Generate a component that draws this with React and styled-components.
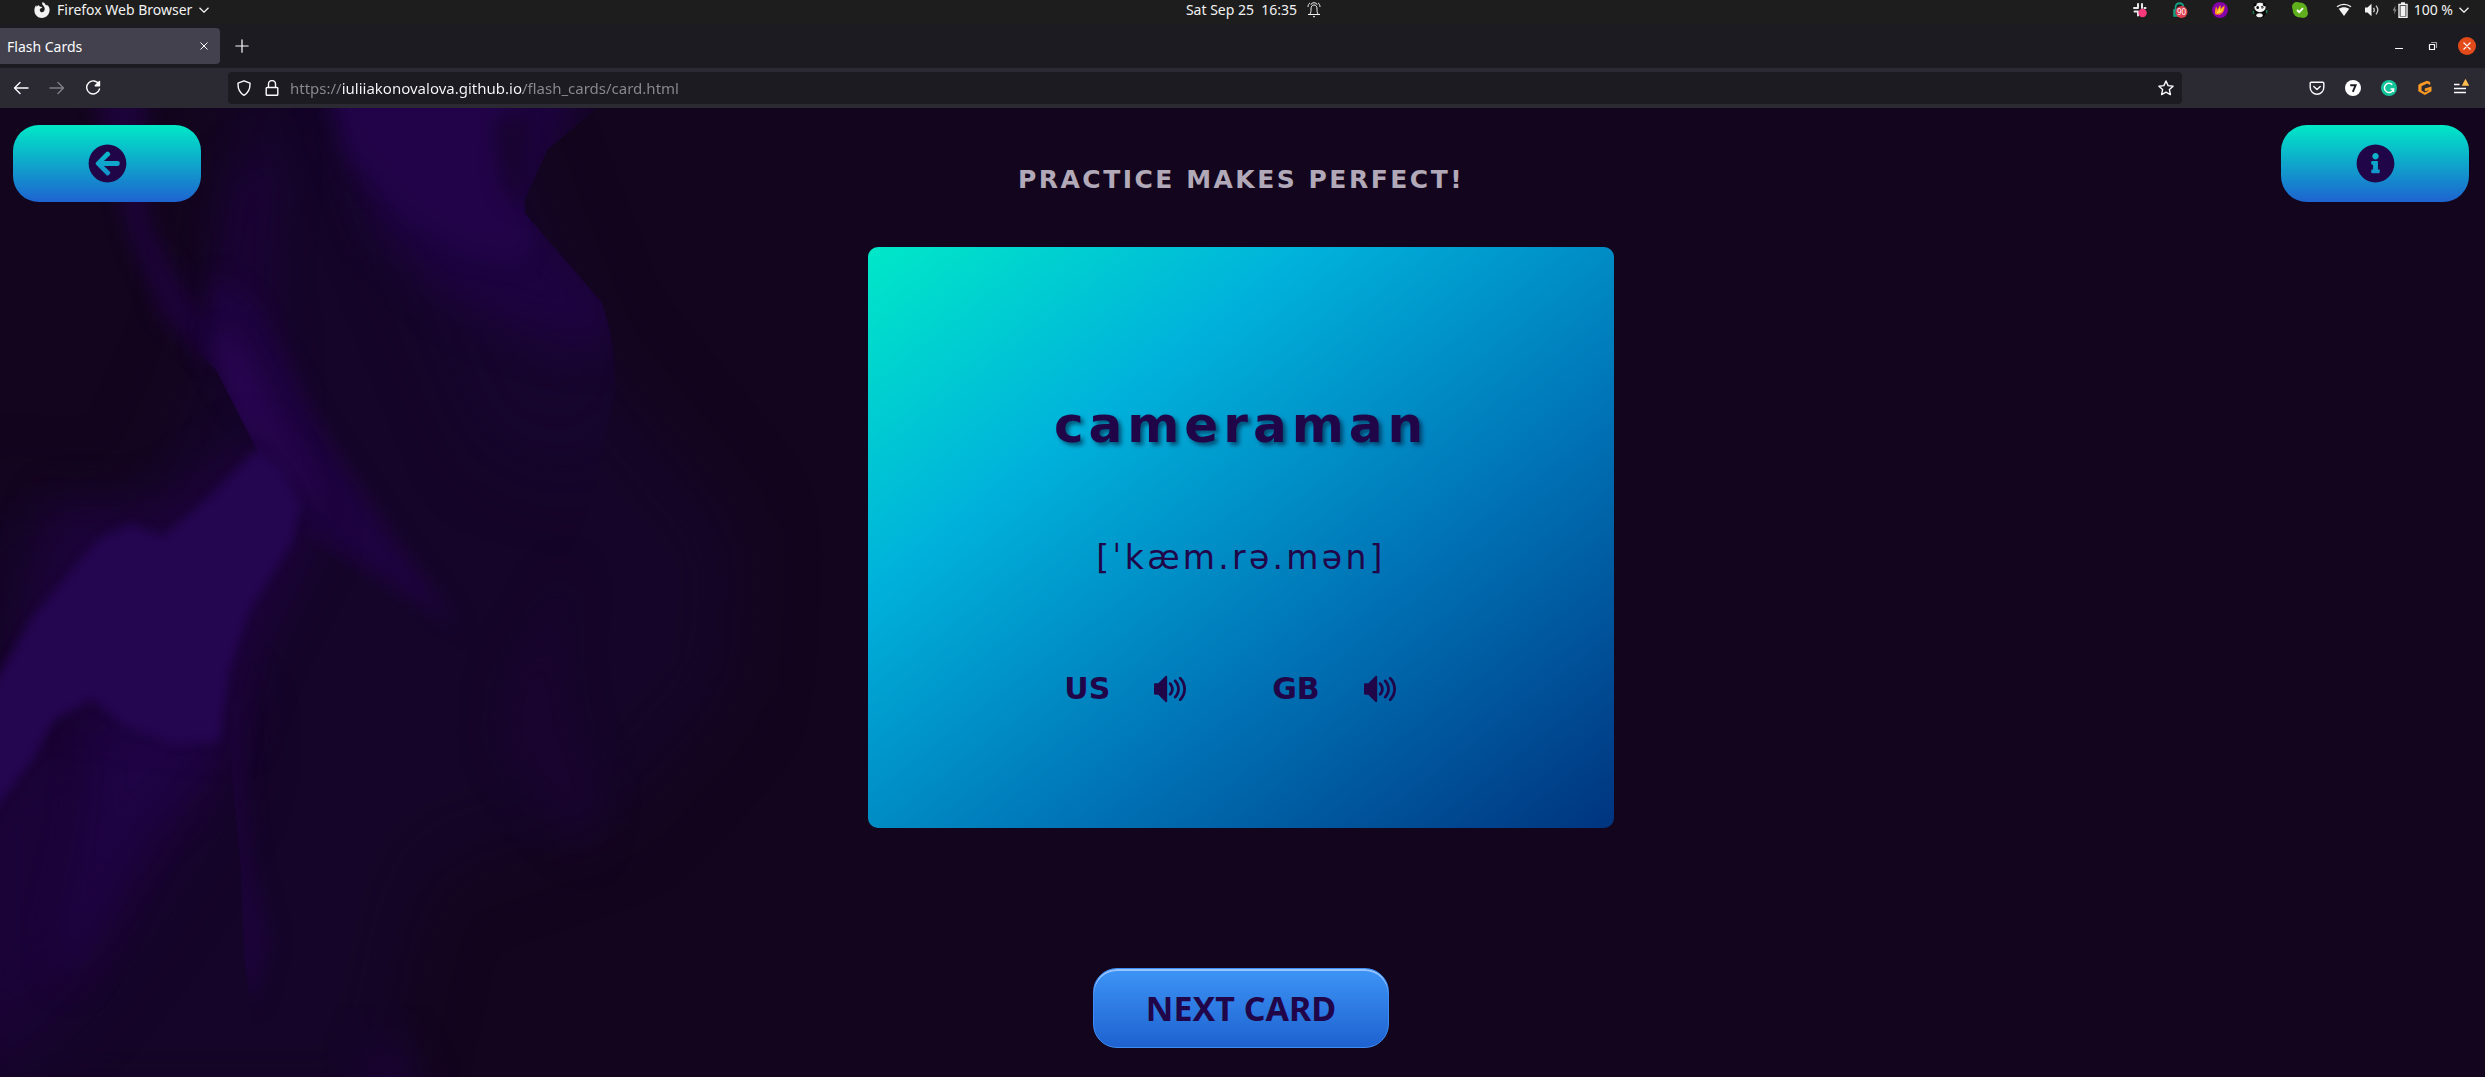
import React from "react";
import styled, { createGlobalStyle } from "styled-components";
import { FaArrowCircleLeft, FaInfoCircle } from "react-icons/fa";
import { ImVolumeHigh } from "react-icons/im";

const GlobalStyle = createGlobalStyle`
  * { box-sizing: border-box; }
  body {
    margin: 0;
    background: #13051d;
    font-family: "Noto Sans", "Open Sans", sans-serif;
    font-size: 14px;
    color: #fbfbfe;
  }
  button { border: 0; padding: 0; background: none; color: inherit; font: inherit; cursor: pointer; }
  svg { display: block; flex: none; }
`;

const Screen = styled.div`
  display: flex;
  flex-direction: column;
  min-height: 100vh;
`;

/* ---------- desktop bar ---------- */

const DesktopBar = styled.div`
  display: grid;
  grid-template-columns: 1fr auto 1fr;
  align-items: center;
  height: 24px;
  padding: 0 16px 4px;
  background: #1d1d1d;
  color: #f2f2f2;
  line-height: 20px;
`;

const AppMenu = styled.button`
  display: flex;
  align-items: center;
  justify-self: start;
  gap: 7px;
  margin-left: 18px;
`;

const Clock = styled.button`
  display: flex;
  align-items: center;
  gap: 10px;
  padding-left: 22px;
  white-space: pre;
`;

const Tray = styled.div`
  display: flex;
  align-items: center;
  justify-self: end;
  gap: 24px;
`;

const SystemMenu = styled.button`
  display: flex;
  align-items: center;
  gap: 6px;
  margin-left: 4px;
`;

const SystemIcons = styled.span`
  display: flex;
  align-items: center;
  gap: 12px;
`;

/* ---------- browser ---------- */

const TabStrip = styled.div`
  display: flex;
  align-items: center;
  height: 44px;
  padding-right: 9px;
  background: #1c1b22;
`;

const Tab = styled.div`
  display: flex;
  align-items: center;
  justify-content: space-between;
  width: 220px;
  height: 36px;
  padding: 0 11px 0 7px;
  border-radius: 0 4px 4px 0;
  background: #42414d;
`;

const IconButton = styled.button`
  display: grid;
  place-items: center;
  width: ${(p) => p.$size || 36}px;
  height: ${(p) => p.$size || 36}px;
  opacity: ${(p) => (p.$dim ? 0.4 : 1)};
`;

const NewTab = styled(IconButton)`
  margin-left: 4px;
`;

const WindowControls = styled.div`
  display: flex;
  align-items: center;
  gap: 16px;
  margin-left: auto;
`;

const CloseWindow = styled(IconButton)`
  border-radius: 50%;
  background: #e24a19;
`;

const Toolbar = styled.div`
  display: flex;
  align-items: center;
  height: 40px;
  padding: 0 6px 0 3px;
  background: #2b2a33;
`;

const AddressBar = styled.div`
  display: flex;
  flex: 1;
  align-items: center;
  height: 32px;
  margin: 0 117px;
  padding: 0 2px;
  border-radius: 4px;
  background: #1c1b22;
`;

/* the host is brighter than the scheme and the path */
const Address = styled.input`
  flex: 1;
  min-width: 0;
  height: 24px;
  margin-left: 4px;
  padding: 0;
  border: 0;
  outline: 0;
  color: transparent;
  font: inherit;
  font-size: 15px;
  background: linear-gradient(90deg, #8b8a92 52px, #fbfbfe 52px, #fbfbfe 233px, #8b8a92 233px);
  background-clip: text;
  -webkit-background-clip: text;
`;

/* ---------- page ---------- */

const Page = styled.main`
  position: relative;
  display: flex;
  flex: 1;
  flex-direction: column;
  align-items: center;
  padding: 17px 16px 28px 13px;
  background: #13051d;
  font-family: "DejaVu Sans", sans-serif;
`;

const Silk = styled.svg`
  position: absolute;
  top: 0;
  left: 0;
  width: 850px;
  height: 100%;
`;

const Header = styled.header`
  position: relative;
  display: grid;
  grid-template-columns: 1fr auto 1fr;
  align-self: stretch;
  align-items: start;
  min-height: 122px;
`;

const PillButton = styled.button`
  display: grid;
  place-items: center;
  justify-self: ${(p) => p.$side};
  width: 188px;
  height: 77px;
  border-radius: 26px;
  background: linear-gradient(#00e9c7, #1e63d0);
  color: #210549;
`;

const Motto = styled.h1`
  margin: 40px 0 0;
  color: #b1a9b8;
  font-size: 25px;
  line-height: 30px;
  letter-spacing: 0.1em;
  text-transform: uppercase;
`;

const Card = styled.section`
  position: relative;
  display: flex;
  flex-direction: column;
  align-items: center;
  width: 30vw;
  min-height: calc((100vh - 108px) * 0.6);
  padding-top: 149px;
  border-radius: 10px;
  background: linear-gradient(to bottom right, #00e8c8 0%, #00b1db 30%, #0072b5 64%, #00347f 100%);
  color: #210549;
`;

const Word = styled.h2`
  margin: 0;
  font-size: 50px;
  line-height: 58px;
  letter-spacing: 0.1em;
  text-shadow: 3px 3px 4px rgba(0, 20, 50, 0.6);
`;

const Phonetic = styled.p`
  margin: 85px 0 94px;
  font-size: 33px;
  line-height: 38px;
  letter-spacing: 0.1em;
`;

const Voices = styled.div`
  display: flex;
  gap: 84px;
  padding-right: 20px;
`;

const Voice = styled.div`
  display: flex;
  align-items: center;
  gap: 42px;
  font-size: 30px;
  font-weight: 700;
  line-height: 36px;
`;

const NextButton = styled.button`
  position: relative;
  width: 296px;
  height: 80px;
  margin-top: 140px;
  border: 1px solid #3d8df3;
  border-radius: 24px;
  background: linear-gradient(#3d94f6, #1e62d0);
  box-shadow: inset 0 2px 0 #97c4fe;
  color: #210549;
  font-family: "Noto Sans", "Open Sans", sans-serif;
  font-size: 34px;
  font-weight: 700;
  line-height: 40px;
`;

/* ---------- icons ---------- */

const Line = ({ size = 16, width = 1.4, children }) => (
  <svg width={size} height={size} viewBox="0 0 16 16" fill="none" stroke="currentColor"
    strokeWidth={width} strokeLinecap="round" strokeLinejoin="round" aria-hidden="true">
    {children}
  </svg>
);

const Chevron = () => (
  <svg width="10" height="6" viewBox="0 0 10 6" fill="none" stroke="currentColor" strokeWidth="1.3" aria-hidden="true">
    <path d="M.5.7 5 5.2 9.500.7" />
  </svg>
);

const FirefoxMark = () => (
  <svg width="16" height="16" viewBox="0 0 16 16" aria-hidden="true">
    <path fill="#f2f2f2" d="M8.600 0c2 .8 2.500 1.800 2.700 2.800 1-.1 1.400.4 1.700 1.100.3-.2.300-.7.200-1.200C15 4.300 15.800 6.200 15.600 8.600 15.200 12.900 12 16 8 16 3.700 16 .4 12.800.4 8.500c0-2.300.7-4.100 1.800-5.500 0 .8.200 1.300.5 1.700.5-.9 1.200-1.300 2.100-1.500.5.900.9 1.300 1.700 1.500l1.700.2c-.2 1-1 1.400-1.900 1.700-.7.700-.6 1.500-.3 2.300.6 1.500 2.800 1.700 3.900.4 1.500-1.800.8-4.400-.5-5.600C8 2.600 7.900 1.300 8.600 0z" />
  </svg>
);

const Bell = () => (
  <svg width="14" height="16" viewBox="0 0 14 16" fill="none" stroke="currentColor" strokeWidth="1" aria-hidden="true">
    <path d="M1 12.500h12M3 12c1-1.500 1-3 1-5 0-2.500 1-4 3-4s3 1.500 3 4c0 2 0 3.500 1 5M6 14.700h2M3 .8C1.700 1.800 1 3.200 1 5M11 .8c1.300 1 2 2.400 2 4.200M4.500 3C3.300 2 5 .8 7 .8S10.700 2 9.500 3" />
  </svg>
);

const SlackTray = () => (
  <svg width="16" height="16" viewBox="0 0 16 16" aria-hidden="true">
    <g stroke="#e9e9e9" strokeWidth="2" strokeLinecap="round">
      <path d="M6 2v3M2 6h4M10 2v4M12.500 6h1M2.500 9.500h3.500M6 10v3.600" />
    </g>
    <circle cx="10.600" cy="11" r="4.200" fill="#f7397c" />
  </svg>
);

const BadgeTray = () => (
  <svg width="16" height="16" viewBox="0 0 16 16" aria-hidden="true">
    <path d="M2 14V8h6v6zM3.500 8V5a4 4 0 0 1 8 0v2" fill="#17806b" stroke="#17a085" strokeWidth="1.600" />
    <path d="M4.500 8V5.500a3 3 0 0 1 6 0V8z" fill="#1d1d1d" />
    <circle cx="9.500" cy="10" r="6" fill="#e03f52" />
    <text x="9.500" y="13" textAnchor="middle" fontSize="8" fontFamily="Noto Sans, sans-serif" fill="#fff">90</text>
  </svg>
);

const FlameTray = () => (
  <svg width="16" height="16" viewBox="0 0 16 16" aria-hidden="true">
    <circle cx="8" cy="8" r="8" fill="#8501a8" />
    <path d="M3 11.500c0-3 .3-5 1-7 .8.800 1.200 2 1.200 3.500C6 6.500 7 5 8 3c.8 1.200.9 2.500.8 4 1-1.400 2.200-2.500 3.700-3.500.3 4-1.500 8.600-5.300 9.400-1.700.3-3.200-.2-4.200-1.400z" fill="#ff9d16" />
    <path d="M5 11.500c0-2 2-3.500 2.500-6 .8 1 .8 2.500.5 3.500 1.300-.7 2-2 3-3-.3 3.500-1.800 5.500-6 5.500z" fill="#ffd43c" />
    <path d="M3 11.500c1 .8 2.500.8 4 .3 1.500-.5 2.500-1.500 3.500-2.500-.8 2.200-2 3.400-3.500 3.700-1.500.3-3-.2-4-1.500z" fill="#f23c5b" />
  </svg>
);

const PandaTray = () => (
  <svg width="16" height="16" viewBox="0 0 16 16" aria-hidden="true">
    <circle cx="8" cy="10" r="6" fill="#070707" />
    <path d="M1.500 9v3M14.600 8v3" stroke="#1f7a4d" strokeWidth="1.500" />
    <ellipse cx="8" cy="5.500" rx="5.600" ry="4.700" fill="#f4f4f4" />
    <circle cx="3" cy="2.600" r="1.600" fill="#0a0a0a" />
    <circle cx="12.500" cy="2.600" r="1.600" fill="#0a0a0a" />
    <ellipse cx="5.700" cy="5.500" rx="1.300" ry="1.500" fill="#0a0a0a" />
    <ellipse cx="10.200" cy="5.200" rx="1.200" ry="1.300" fill="#0a0a0a" />
    <circle cx="10" cy="5.300" r=".6" fill="#fff" />
    <ellipse cx="7.500" cy="13.200" rx="3.200" ry="2" fill="#f0f0f0" />
  </svg>
);

const CheckTray = () => (
  <svg width="16" height="16" viewBox="0 0 16 16" aria-hidden="true">
    <circle cx="8" cy="8" r="7.400" fill="#5fb01c" />
    <circle cx="4.700" cy="4.700" r="4.700" fill="#5fb01c" />
    <circle cx="11.300" cy="11.300" r="4.700" fill="#5fb01c" />
    <path d="m5 8 2.200 2.200L11 6.200" fill="none" stroke="#fff" strokeWidth="1.800" />
  </svg>
);

const Wifi = () => (
  <svg width="16" height="14" viewBox="0 0 16 14" aria-hidden="true">
    <path d="M1 3.800C5 .6 11 .6 15 3.800" fill="none" stroke="#f2f2f2" strokeWidth="1.400" />
    <path d="M2.700 5.700C6 3.600 10 3.600 13.300 5.700L8 13z" fill="#f2f2f2" />
  </svg>
);

const Volume = () => (
  <svg width="16" height="14" viewBox="0 0 16 14" aria-hidden="true">
    <path d="M1 4.500h2.500L7.500.8v12.400L3.500 9.500H1z" fill="#f2f2f2" />
    <path d="M9.500 4.800c1 1.400 1 3 0 4.400M12 2.600c2.200 2.700 2.200 6.100 0 8.800" fill="none" stroke="#d0d0d0" strokeWidth="1.300" />
  </svg>
);

const Battery = () => (
  <svg width="16" height="16" viewBox="0 0 16 16" aria-hidden="true">
    <path d="M3.500 3.500.7 8.500h1.800L2 12.500l2.500-5H3z" fill="#8c8c8c" />
    <path d="M9 1h4M7 2.500h8v12.800H7z" fill="none" stroke="#f2f2f2" strokeWidth="1.400" />
    <path d="M8.500 4h5v10h-5z" fill="#f2f2f2" />
  </svg>
);

const SevenMark = () => (
  <svg width="16" height="16" viewBox="0 0 16 16" aria-hidden="true">
    <circle cx="8" cy="8" r="8" fill="#fff" />
    <path d="M5.200 5.300h5.400L7.800 11.800" fill="none" stroke="#1c1b22" strokeWidth="1.900" />
  </svg>
);

const GreenMark = () => (
  <svg width="16" height="16" viewBox="0 0 16 16" aria-hidden="true">
    <circle cx="8" cy="8" r="8" fill="#15c39a" />
    <path d="M11.300 4.700A4.600 4.600 0 1 0 12.500 9H9.500M12.500 9v3" fill="none" stroke="#fff" strokeWidth="1.500" />
  </svg>
);

const HexMark = () => (
  <svg width="16" height="16" viewBox="0 0 16 16" aria-hidden="true">
    <path d="M10 .8 3.200 3.600 1.300 5v6.200L7.800 15l6.700-3.800V6.500L7.800 8.600v2.600l3.700-1v.6l-3.700 1.600-3.300-2V6.200L10.200 3.600l3 1.400V2z" fill="#f99a24" />
  </svg>
);

const MenuMark = () => (
  <svg width="18" height="20" viewBox="0 0 18 20" aria-hidden="true">
    <path d="M2 6.500h5.500M2 10.500h12M2 14.500h12" stroke="#fbfbfe" strokeWidth="1.300" />
    <path d="m13.500.8 3.700 6.900H9.800z" fill="#ffbd4f" />
  </svg>
);

const SilkBackdrop = () => (
  <Silk viewBox="0 13 1568 1555" preserveAspectRatio="none" aria-hidden="true" colorInterpolationFilters="sRGB">
    <defs>
      <filter id="wide" x="-40%" y="-40%" width="180%" height="180%"><feGaussianBlur stdDeviation="60" /></filter>
      <filter id="soft" x="-40%" y="-40%" width="180%" height="180%"><feGaussianBlur stdDeviation="34" /></filter>
      <filter id="mid" x="-40%" y="-40%" width="180%" height="180%"><feGaussianBlur stdDeviation="18" /></filter>
      <filter id="fine" x="-40%" y="-40%" width="180%" height="180%"><feGaussianBlur stdDeviation="8" /></filter>
      <clipPath id="fold"><path d="M300 0H1120L1010 80 968 160V182L1110 325Q1136 390 1135 465L1092 640 1040 760 900 1000H300z" /></clipPath>
      <clipPath id="streak"><path d="M420 960 428 1080 444 1230 450 1380 470 1500H760V960z" /></clipPath>
      <clipPath id="ridge"><path d="M150 0 200 160 300 350 400 435 470 555 560 700 900 920V0z" /></clipPath>
    </defs>
    <path filter="url(#wide)" fill="#150528" d="M-60 640 250 660 380 400 420 -60H900L1100 400 1380 700 1360 950 1150 1150 800 1250 700 1640H-60z" />
    <g clipPath="url(#fold)">
      <path filter="url(#wide)" fill="#17052e" d="M640 0H1080L1200 300 1180 480 1100 600 900 560z" />
      <path filter="url(#soft)" fill="#1d0340" d="M600 -60H1090L970 170 1150 340 1100 400 960 370 820 310 690 200z" />
      <path filter="url(#mid)" fill="#220349" d="M605 -40H960L925 110 985 210 960 260 860 245 740 180 645 90z" />
      <path filter="url(#mid)" fill="#180430" d="M910 30 980 20 960 170 930 140z" />
    </g>
    <path filter="url(#mid)" fill="#1d033c" d="M170 -20H270L275 200 350 320 390 350 400 430 300 350 240 220z" opacity=".9" />
    <path filter="url(#soft)" fill="#1a0336" d="M430 120 520 60 500 300 540 500 460 460 390 350z" />
    <g clipPath="url(#ridge)">
      <path filter="url(#mid)" fill="#1e0340" d="M395 280 470 330 600 540 740 720 850 850 780 810 560 690 440 520 380 420z" />
      <path filter="url(#mid)" fill="#27054f" d="M395 370 440 390 560 580 600 660 520 620 430 520z" />
    </g>
    <path filter="url(#wide)" fill="#1b0338" d="M-80 1080 200 950 430 1000 400 1100 250 1300 120 1450 -80 1600z" />
    <path filter="url(#soft)" fill="#1f0344" d="M180 960 420 960 390 1070 270 1170 190 1300 130 1410 110 1350 160 1180z" />
    <path filter="url(#soft)" fill="#1b0338" d="M90 650 280 650 470 540 600 690 490 880 440 1020 0 960z" />
    <path filter="url(#fine)" fill="#240550" d="M-20 950 60 830 180 705 240 680 300 700 370 650 475 560 520 590 555 650 540 710 460 820 422 920 405 1030 320 1035 230 1005 170 962 100 995 60 1060 -20 1150z" />
    <g clipPath="url(#streak)">
      <path filter="url(#mid)" fill="#1b0338" d="M400 900 440 960 460 1200 500 1350 470 1450 430 1400z" />
    </g>
    <path filter="url(#soft)" fill="#19042f" d="M1050 760 1038 900 1060 1020 1110 1110 1080 1200 990 1120 920 1030 935 930z" />
    <path filter="url(#soft)" fill="#1a0335" d="M690 1500 740 1520 790 1620H650z" />
  </Silk>
);

export default function App() {
  return (
    <Screen>
      <GlobalStyle />
      <DesktopBar>
        <AppMenu><FirefoxMark />Firefox Web Browser<Chevron /></AppMenu>
        <Clock>{"Sat Sep 25  16:35"}<Bell /></Clock>
        <Tray>
          <SlackTray /><BadgeTray /><FlameTray /><PandaTray /><CheckTray />
          <SystemMenu>
            <SystemIcons><Wifi /><Volume /><Battery /></SystemIcons>
            100 %
            <Chevron />
          </SystemMenu>
        </Tray>
      </DesktopBar>

      <TabStrip>
        <Tab>
          Flash Cards
          <IconButton $size={10} aria-label="Close tab"><Line size={8} width={2}><path d="m1.500 1.500 13 13M14.500 1.500l-13 13" /></Line></IconButton>
        </Tab>
        <NewTab aria-label="New tab"><Line size={14}><path d="M8 1v14M1 8h14" /></Line></NewTab>
        <WindowControls>
          <IconButton $size={18} aria-label="Minimise"><Line size={16} width={1.200}><path d="M4.500 10.500h7" /></Line></IconButton>
          <IconButton $size={18} aria-label="Restore">
            <Line size={16} width={1.200}><path d="M4.500 6.500h5v5h-5z" /><path opacity=".6" d="M6.500 4.500h5v5" /></Line>
          </IconButton>
          <CloseWindow $size={18} aria-label="Close"><Line size={10} width={2.200}><path d="m3 3 10 10M13 3 3 13" /></Line></CloseWindow>
        </WindowControls>
      </TabStrip>

      <Toolbar>
        <IconButton aria-label="Back"><Line><path d="M15 8H1.500M7 2.500 1.500 8 7 13.500" /></Line></IconButton>
        <IconButton $dim aria-label="Forward"><Line><path d="M1 8h13.500M9 2.500 14.500 8 9 13.500" /></Line></IconButton>
        <IconButton aria-label="Reload"><Line><path d="M14 4.500A6.500 6.500 0 1 0 14.500 9" /><path fill="currentColor" d="M14.500 1.500v4.300h-4.300z" /></Line></IconButton>
        <AddressBar>
          <IconButton $size={28} aria-label="Protections"><Line><path d="M8 .8 14 3.200C14.200 8.500 12.300 13 8 15.300 3.700 13 1.800 8.500 2 3.200z" /></Line></IconButton>
          <IconButton $size={28} aria-label="Site information"><Line><path d="M3 7.500h10a.8.8 0 0 1 .8.800v6.100a.8.8 0 0 1-.8.800H3a.8.8 0 0 1-.8-.8V8.300A.8.8 0 0 1 3 7.500zM4.500 7.500V4a3.500 3.500 0 0 1 7 0v3.500" /></Line></IconButton>
          <Address type="text" aria-label="Address" spellCheck={false} defaultValue="https://iuliiakonovalova.github.io/flash_cards/card.html" />
          <IconButton $size={28} aria-label="Bookmark this page"><Line><path d="m8 1 2.100 4.600 5 .6-3.700 3.400 1 5L8 12.200l-4.400 2.400 1-5L.9 6.200l5-.6z" /></Line></IconButton>
        </AddressBar>
        <IconButton aria-label="Save to Pocket"><Line><path d="M2.200 2.200h11.600a1 1 0 0 1 1 1V7.500a6.800 6.800 0 0 1-13.600 0V3.200a1 1 0 0 1 1-1zM4.800 6.500 8 9.500l3.200-3" /></Line></IconButton>
        <IconButton aria-label="Seven extension"><SevenMark /></IconButton>
        <IconButton aria-label="Writing assistant"><GreenMark /></IconButton>
        <IconButton aria-label="Extension"><HexMark /></IconButton>
        <IconButton aria-label="Application menu"><MenuMark /></IconButton>
      </Toolbar>

      <Page>
        <SilkBackdrop />
        <Header>
          <PillButton $side="start" aria-label="Back to sets"><FaArrowCircleLeft size={39} /></PillButton>
          <Motto>Practice makes perfect!</Motto>
          <PillButton $side="end" aria-label="Information"><FaInfoCircle size={39} /></PillButton>
        </Header>
        <Card>
          <Word>cameraman</Word>
          <Phonetic>[ˈkæm.rə.mən]</Phonetic>
          <Voices>
            {["US", "GB"].map((code) => (
              <Voice key={code}>
                {code}
                <IconButton aria-label={`Play ${code} pronunciation`}><ImVolumeHigh size={32} /></IconButton>
              </Voice>
            ))}
          </Voices>
        </Card>
        <NextButton>NEXT CARD</NextButton>
      </Page>
    </Screen>
  );
}
